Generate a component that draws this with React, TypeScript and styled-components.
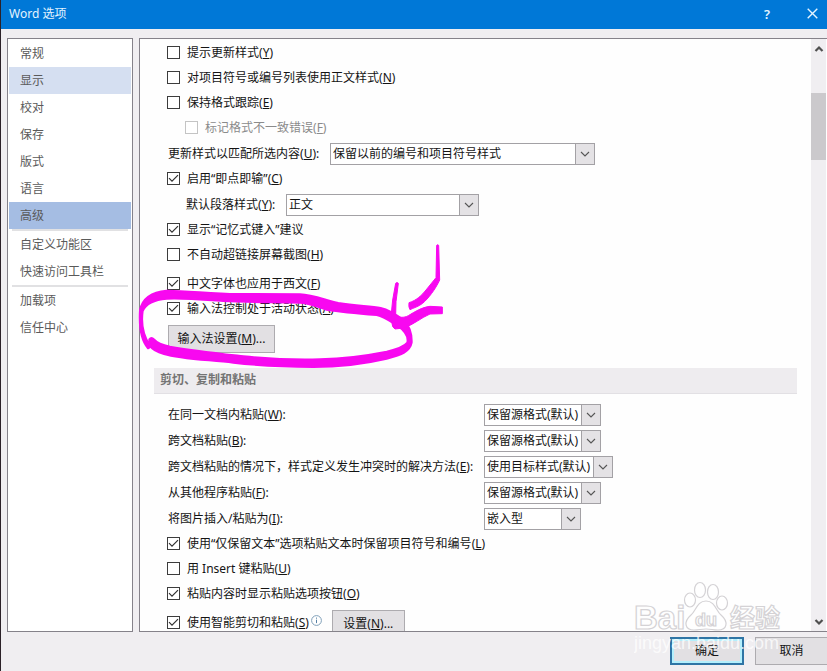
import React, { useId } from "react";
import styled, { createGlobalStyle } from "styled-components";

const GlobalStyle = createGlobalStyle`
  * { box-sizing: border-box; }
  body {
    margin: 0;
    overflow: hidden;
    background: #f0eef1;
    color: #141414;
    font: 12px/18px "Noto Sans", "Noto Sans CJK SC", sans-serif;
  }
  button, select, input { font: inherit; color: inherit; }
`;

const Dialog = styled.main`
  position: relative;
  display: flex;
  flex-direction: column;
  height: 100vh;
  overflow: hidden;
  border-left: 1px solid #2b2128;
`;

const TitleBar = styled.header`
  display: flex;
  align-items: center;
  flex: none;
  height: 29px;
  padding: 0 8px 2px;
  background: #0078d7;
  color: #e4f4ff;
`;

const Title = styled.h1`
  flex: 1;
  margin: 0;
  font-size: 12px;
  font-weight: 400;
`;

const TitleButton = styled.button`
  display: grid;
  place-items: center;
  width: 14px;
  height: 20px;
  padding: 0;
  margin-left: 31px;
  border: 0;
  background: none;
  font-size: 13px;
  font-weight: 600;
`;

const Body = styled.div`
  display: flex;
  flex: 1;
  min-height: 0;
  gap: 6px;
  padding: 9px 0 0 6px;
`;

const Sidebar = styled.nav`
  flex: none;
  width: 126px;
  padding: 1px;
  border: 1px solid #85828a;
  background: #fff;
`;

const NavItem = styled.a<{ $tone?: "hover" | "current" }>`
  display: block;
  height: 27px;
  padding: 0 11px;
  line-height: 27px;
  color: #5a5a5a;
  text-decoration: none;
  background: ${(p) =>
    p.$tone === "current" ? "#a5bde3" : p.$tone === "hover" ? "#d5dff1" : "transparent"};
`;

const Divider = styled.hr`
  height: 2px;
  margin: 0 3px;
  border: 0;
  background: #e1e1e3;
`;

const Panel = styled.section`
  display: flex;
  flex: 1;
  min-width: 0;
  border: 1px solid #85828a;
  border-right: 0;
  background: #fefefe;
`;

const Options = styled.div`
  flex: 1;
  min-width: 0;
  overflow: hidden;
  padding: 1px 14px 0;
`;

const Group = styled.div`
  padding-left: 13px;
`;

const Row = styled.div<{ $indent?: boolean; $spaced?: boolean }>`
  display: flex;
  align-items: center;
  height: 25px;
  margin-top: ${(p) => (p.$spaced ? 4 : 0)}px;
  padding-left: ${(p) => (p.$indent ? 18 : 0)}px;
  white-space: nowrap;
`;

const CheckLabel = styled.label<{ $disabled?: boolean }>`
  display: flex;
  align-items: center;
  gap: 7px;
  color: ${(p) => (p.$disabled ? "#8b8b8b" : "inherit")};
`;

const CheckInput = styled.input`
  appearance: none;
  width: 13px;
  height: 13px;
  margin: 0;
  border: 1px solid #3c3c3c;
  background: #fff center / 11px 11px no-repeat;
  &:checked {
    background-image: url("data:image/svg+xml,%3Csvg xmlns='http://www.w3.org/2000/svg' viewBox='0 0 11 11'%3E%3Cpath d='M1 5.2 4 8.2 10 2.2' fill='none' stroke='%23303030' stroke-width='1.2'/%3E%3C/svg%3E");
  }
  &:disabled { border-color: #c4c4c4; }
`;

const FieldRow = styled.div<{ $indent?: boolean }>`
  display: grid;
  grid-template-columns: ${(p) => (p.$indent ? "100px auto" : "162px auto")};
  justify-content: start;
  align-items: center;
  height: 26px;
  padding: 2px 0 0 ${(p) => (p.$indent ? 19 : 1)}px;
  white-space: nowrap;
`;

const PasteGrid = styled.div`
  display: grid;
  grid-template-columns: 316px auto;
  grid-auto-rows: 22px;
  justify-content: start;
  align-items: center;
  gap: 4px 0;
  padding: 10px 0 1px 1px;
  white-space: nowrap;
`;

const SelectBox = styled.div<{ $width: number }>`
  position: relative;
  width: ${(p) => p.$width}px;
  height: 22px;
`;

const SelectInput = styled.select`
  appearance: none;
  display: block;
  width: 100%;
  height: 22px;
  padding: 0 20px 0 2px;
  border: 1px solid #a3a1a5;
  border-radius: 0;
  background: #fff;
  line-height: 20px;
`;

const SelectArrow = styled.span`
  position: absolute;
  inset: 0 0 0 auto;
  display: grid;
  place-items: center;
  width: 20px;
  border: 1px solid #a3a1a5;
  background: #e4e2e5;
  pointer-events: none;
`;

const PushButton = styled.button<{ $width: number; $primary?: boolean }>`
  flex: none;
  width: ${(p) => p.$width}px;
  height: 28px;
  padding: 0;
  border: ${(p) => (p.$primary ? "2px solid #2f75a5" : "1px solid #adabaf")};
  box-shadow: ${(p) => (p.$primary ? "inset 0 0 0 2px #b4effc" : "none")};
  background: #e2e0e3;
  text-align: center;
`;

const ButtonRow = styled.div`
  padding: 4px 0 0 1px;
`;

const SectionTitle = styled.h2`
  height: 26px;
  margin: 15px 0 0;
  padding: 0 6px;
  background: #eeecef;
  border-bottom: 1px solid #e2e0e4;
  color: #747474;
  font-size: 12px;
  font-weight: 700;
  line-height: 24px;
`;

const SmartRow = styled.div`
  display: flex;
  align-items: flex-start;
  padding-top: 4px;
  white-space: nowrap;
  svg { margin: 5px 10px 0 2px; }
  label { height: 25px; }
`;

const ScrollTrack = styled.div`
  display: flex;
  flex-direction: column;
  align-items: center;
  flex: none;
  width: 16px;
  padding: 5px 0 4px;
  border-right: 1px solid #fff;
  background: #f0eef1;
`;

const ScrollThumb = styled.div`
  width: 100%;
  height: 67px;
  margin: 39px 0 auto;
  background: #cbc9cc;
`;

const Footer = styled.footer`
  display: flex;
  flex: none;
  justify-content: flex-end;
  gap: 11px;
  height: 39px;
  padding-top: 5px;
  margin-right: -1px;
`;

const Ink = styled.svg`
  position: absolute;
  left: 129px;
  top: 230px;
  pointer-events: none;
`;

const Watermark = styled.svg`
  position: absolute;
  right: 33px;
  bottom: 6px;
  pointer-events: none;
`;

function Chevron({ up, bold }: { up?: boolean; bold?: boolean }) {
  return (
    <svg width="10" height="10" viewBox="0 0 10 10" aria-hidden="true">
      <path
        d={up ? "M1.5 7 5 3.5 8.5 7" : bold ? "M1.5 3 5 6.5 8.5 3" : "M1 3 5 7 9 3"}
        fill="none"
        stroke={bold ? "#505050" : "#555"}
        strokeWidth={bold ? 2.2 : 1.1}
      />
    </svg>
  );
}

type LabelProps = { text: string; hotkey?: string; after?: string };

function LabelText({ text, hotkey, after = "" }: LabelProps) {
  return (
    <span>
      {text}
      {hotkey && <>(<u>{hotkey}</u>)</>}
      {after}
    </span>
  );
}

function Check({ checked, disabled, ...label }: LabelProps & { checked?: boolean; disabled?: boolean }) {
  return (
    <CheckLabel $disabled={disabled}>
      <CheckInput type="checkbox" defaultChecked={checked} disabled={disabled} />
      <LabelText {...label} />
    </CheckLabel>
  );
}

function Field({ value, width, ...label }: LabelProps & { value: string; width: number }) {
  const id = useId();
  return (
    <>
      <label htmlFor={id}>
        <LabelText {...label} after=":" />
      </label>
      <SelectBox $width={width}>
        <SelectInput id={id} defaultValue={value}>
          <option>{value}</option>
        </SelectInput>
        <SelectArrow>
          <Chevron />
        </SelectArrow>
      </SelectBox>
    </>
  );
}

const navGroups: string[][] = [
  ["常规", "显示", "校对", "保存", "版式", "语言", "高级"],
  ["自定义功能区", "快速访问工具栏"],
  ["加载项", "信任中心"],
];

const pasteFields = [
  { text: "在同一文档内粘贴", hotkey: "W", value: "保留源格式(默认)", width: 117 },
  { text: "跨文档粘贴", hotkey: "B", value: "保留源格式(默认)", width: 117 },
  { text: "跨文档粘贴的情况下，样式定义发生冲突时的解决方法", hotkey: "E", value: "使用目标样式(默认)", width: 129 },
  { text: "从其他程序粘贴", hotkey: "F", value: "保留源格式(默认)", width: 117 },
  { text: "将图片插入/粘贴为", hotkey: "I", value: "嵌入型", width: 97 },
];

export default function App() {
  return (
    <Dialog>
      <GlobalStyle />
      <TitleBar>
        <Title>Word 选项</Title>
        <TitleButton aria-label="帮助">?</TitleButton>
        <TitleButton aria-label="关闭">
          <svg width="11" height="11" viewBox="0 0 11 11" aria-hidden="true">
            <path d="M.7.7 10.3 10.3M10.3.7.7 10.3" stroke="currentColor" strokeWidth="1.4" />
          </svg>
        </TitleButton>
      </TitleBar>

      <Body>
        <Sidebar>
          {navGroups.map((items, i) => (
            <React.Fragment key={i}>
              {i > 0 && <Divider />}
              {items.map((item) => (
                <NavItem
                  key={item}
                  href="#"
                  $tone={item === "高级" ? "current" : item === "显示" ? "hover" : undefined}
                >
                  {item}
                </NavItem>
              ))}
            </React.Fragment>
          ))}
        </Sidebar>

        <Panel>
          <Options>
            <Group>
              <Row><Check text="提示更新样式" hotkey="Y" /></Row>
              <Row><Check text="对项目符号或编号列表使用正文样式" hotkey="N" /></Row>
              <Row><Check text="保持格式跟踪" hotkey="E" /></Row>
              <Row $indent><Check text="标记格式不一致错误" hotkey="F" disabled /></Row>
              <FieldRow>
                <Field text="更新样式以匹配所选内容" hotkey="U" value="保留以前的编号和项目符号样式" width={265} />
              </FieldRow>
              <Row><Check text="启用“即点即输”" hotkey="C" checked /></Row>
              <FieldRow $indent>
                <Field text="默认段落样式" hotkey="Y" value="正文" width={193} />
              </FieldRow>
              <Row><Check text="显示“记忆式键入”建议" checked /></Row>
              <Row><Check text="不自动超链接屏幕截图" hotkey="H" /></Row>
              <Row $spaced><Check text="中文字体也应用于西文" hotkey="F" checked /></Row>
              <Row><Check text="输入法控制处于活动状态" hotkey="A" checked /></Row>
              <ButtonRow>
                <PushButton $width={107}><LabelText text="输入法设置" hotkey="M" after="..." /></PushButton>
              </ButtonRow>
            </Group>

            <SectionTitle>剪切、复制和粘贴</SectionTitle>
            <Group>
              <PasteGrid>
                {pasteFields.map((field) => (
                  <Field key={field.hotkey} {...field} />
                ))}
              </PasteGrid>
              <Row><Check text="使用“仅保留文本”选项粘贴文本时保留项目符号和编号" hotkey="L" checked /></Row>
              <Row><Check text="用 Insert 键粘贴" hotkey="U" /></Row>
              <Row><Check text="粘贴内容时显示粘贴选项按钮" hotkey="O" checked /></Row>
              <SmartRow>
                <Check text="使用智能剪切和粘贴" hotkey="S" checked />
                <svg width="11" height="11" viewBox="0 0 11 11" aria-hidden="true">
                  <circle cx="5.5" cy="5.5" r="4.9" fill="#fff" stroke="#7f9fb8" />
                  <path d="M5.5 4.7v3.4M5.5 2.6v1.1" stroke="#5580a5" />
                </svg>
                <PushButton $width={73}><LabelText text="设置" hotkey="N" after="..." /></PushButton>
              </SmartRow>
            </Group>
          </Options>
          <ScrollTrack aria-hidden="true">
            <Chevron up bold />
            <ScrollThumb />
            <Chevron bold />
          </ScrollTrack>
        </Panel>
      </Body>

      <Footer>
        <PushButton $width={74} $primary>确定</PushButton>
        <PushButton $width={73}>取消</PushButton>
      </Footer>

      <Ink width="330" height="170" viewBox="0 0 990 510" aria-hidden="true">
        <g fill="#f808f0" stroke="#f808f0" strokeLinejoin="round">
          <path
            strokeWidth="6"
            fillRule="evenodd"
            d="M54 355C32 330 27 290 30 240C38 202 65 186 110 182C180 182 250 193 330 192L510 193C550 195 590 212 625 219C680 228 720 228 752 234C778 240 800 255 820 270C838 287 846 310 845 338C840 365 815 374 770 386C710 400 630 411 550 411C450 410 380 406 310 398C230 389 150 387 102 372C82 366 67 358 62 350ZM60 347L58 328Q64 320 72 328C82 340 98 345 120 350C190 362 280 372 340 379C430 388 500 390 570 388C640 386 720 375 770 365C800 358 823 350 832 338C836 320 826 304 804 288C783 275 763 260 740 255C690 251 640 247 590 239C560 231 540 219 510 218C430 216 350 217 280 213C210 208 150 203 110 206C75 209 48 220 38 243C33 280 38 315 60 347Z"
          />
          <path
            strokeWidth="3"
            d="M797 160Q801 155 805 160L798 215L797 254C806 264 822 264 835 257C855 245 875 232 900 229L937 231V251L900 252C875 262 850 285 820 294L795 297Q786 292 786 280L784 250L788 210ZM920 46Q923 42 926 46L929 150C915 180 895 205 878 220C865 230 850 234 840 239Q835 232 837 218C860 211 875 196 888 180L918 143Z"
          />
        </g>
      </Ink>

      <Watermark width="160" height="84" viewBox="0 0 160 84" aria-hidden="true">
        <g fill="#fff" fillOpacity="0.85" stroke="#d4d2d5" strokeWidth="1.2">
          <text x="0" y="48" fontFamily="Liberation Sans" fontWeight="700" fontSize="33">Bai</text>
          <path d="M72 20C81 20 82 30 87 34C95 41 93 49 84 49C79 49 77 48 72 48C67 48 65 49 60 49C51 49 49 41 57 34C62 30 63 20 72 20Z" />
          <ellipse cx="56" cy="19" rx="5.5" ry="7" />
          <ellipse cx="66" cy="9" rx="5.5" ry="7.5" />
          <ellipse cx="79" cy="11" rx="5.5" ry="7.5" />
          <ellipse cx="88" cy="22" rx="5.5" ry="7" />
          <text x="61" y="45" fontFamily="Liberation Sans" fontWeight="700" fontSize="18">du</text>
          <text x="96" y="46" fontFamily="Noto Sans CJK SC" fontWeight="700" fontSize="25">经验</text>
        </g>
        <text x="0" y="68" fill="#fff" fillOpacity="0.75" fontFamily="Liberation Sans" fontSize="18">
          jingyan.baidu.com
        </text>
      </Watermark>
    </Dialog>
  );
}
